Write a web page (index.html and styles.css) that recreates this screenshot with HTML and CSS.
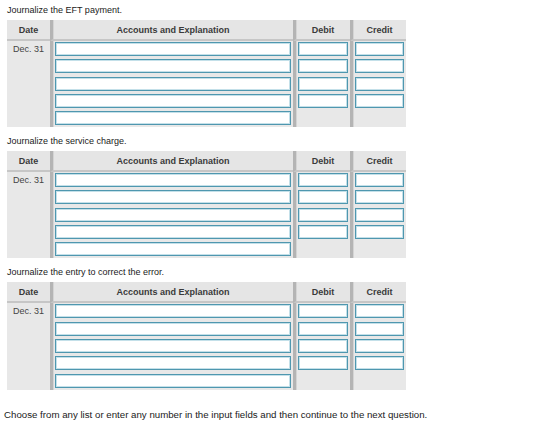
FILE: index.html
```html
<!DOCTYPE html>
<html lang="en">
<head>
  <meta charset="UTF-8" />
  <meta name="viewport" content="width=device-width, initial-scale=1.0"/>
  <title>Journal Entries</title>
  <link rel="stylesheet" href="styles.css">
</head>
<body>

  <div class="page">

    <section class="entry">
      <p class="prompt">Journalize the EFT payment.</p>
      <div class="journal">
        <div class="head">Date</div>
        <div class="head col">Accounts and Explanation</div>
        <div class="head col">Debit</div>
        <div class="head col">Credit</div>

        <div class="cell date">Dec. 31</div>
        <div class="cell col">
          <input type="text"><input type="text"><input type="text"><input type="text"><input type="text">
        </div>
        <div class="cell col">
          <input type="text"><input type="text"><input type="text"><input type="text">
        </div>
        <div class="cell col">
          <input type="text"><input type="text"><input type="text"><input type="text">
        </div>
      </div>
    </section>

    <section class="entry">
      <p class="prompt">Journalize the service charge.</p>
      <div class="journal">
        <div class="head">Date</div>
        <div class="head col">Accounts and Explanation</div>
        <div class="head col">Debit</div>
        <div class="head col">Credit</div>

        <div class="cell date">Dec. 31</div>
        <div class="cell col">
          <input type="text"><input type="text"><input type="text"><input type="text"><input type="text">
        </div>
        <div class="cell col">
          <input type="text"><input type="text"><input type="text"><input type="text">
        </div>
        <div class="cell col">
          <input type="text"><input type="text"><input type="text"><input type="text">
        </div>
      </div>
    </section>

    <section class="entry">
      <p class="prompt">Journalize the entry to correct the error.</p>
      <div class="journal">
        <div class="head">Date</div>
        <div class="head col">Accounts and Explanation</div>
        <div class="head col">Debit</div>
        <div class="head col">Credit</div>

        <div class="cell date">Dec. 31</div>
        <div class="cell col">
          <input type="text"><input type="text"><input type="text"><input type="text"><input type="text">
        </div>
        <div class="cell col">
          <input type="text"><input type="text"><input type="text"><input type="text">
        </div>
        <div class="cell col">
          <input type="text"><input type="text"><input type="text"><input type="text">
        </div>
      </div>
    </section>

    <p class="note">Choose from any list or enter any number in the input fields and then continue to the next question.</p>

  </div>

</body>
</html>
```

FILE: styles.css
```css
body {
  margin: 0;
  font-family: "Liberation Sans", Arial, Helvetica, sans-serif;
  font-size: 9px;
  color: #1a1a1a;
  background: #fff;
}

.page {
  padding: 5px 0 0 7px;
}

.entry {
  margin-bottom: 9px;
}

.prompt {
  margin: 0 0 5px;
  line-height: 10px;
}

.journal {
  display: grid;
  grid-template-columns: 43px 243px 57px 56px;
  width: 399px;
  background: #e8e8e8;
}

.head {
  height: 19px;
  line-height: 20px;
  text-align: center;
  font-weight: bold;
  color: #3a3a3a;
  background: #e5e5e5;
  border-bottom: 2px solid #c6c6c6;
}

/* grooved separators between columns */
.col {
  border-left: 3px solid #b4b4b4;
  box-shadow: inset 1px 0 0 #d4d4d4;
}

.cell {
  padding: 1px 2px 2px 2px;
  display: flex;
  flex-direction: column;
  gap: 3.3px;
}

.date {
  padding-top: 3px;
  text-align: center;
  color: #444;
  line-height: 10px;
}

.cell input {
  box-sizing: border-box;
  height: 14px;
  width: 100%;
  margin: 0;
  padding: 0 2px;
  border: 1px solid #4f97af;
  box-shadow: inset 0 0 0 1px #c4e0e9;
  background: #fff;
  font: inherit;
  outline: none;
}

.note {
  margin: 20px 0 0 -3px;
  font-size: 9.7px;
  line-height: 10px;
}
```
